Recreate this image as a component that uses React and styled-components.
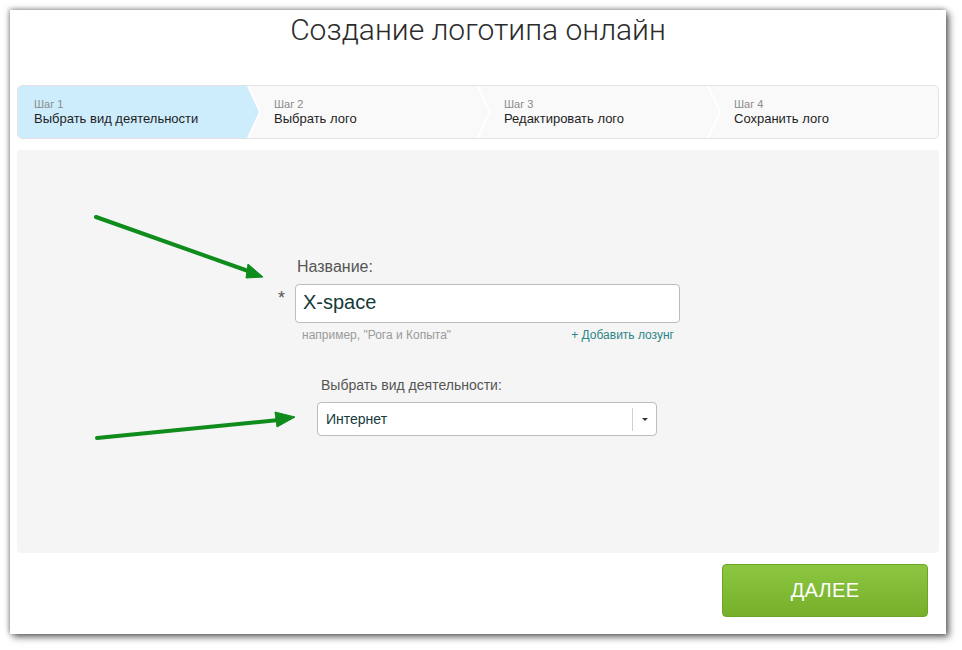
import React from "react";
import styled, { createGlobalStyle } from "styled-components";

const Global = createGlobalStyle`
  html, body { margin: 0; padding: 0; background: #ffffff; }
  body { font-family: "Liberation Sans", Arial, sans-serif; }
  * { box-sizing: border-box; }
`;

const Page = styled.div`
  width: 962px;
  height: 650px;
  padding: 10px 0 0 10px;
  background: #ffffff;
`;

const Card = styled.div`
  width: 936px;
  height: 624px;
  background: #ffffff;
  box-shadow: 3px 3px 7px rgba(0, 0, 0, 0.6), -1px -1px 5px rgba(0, 0, 0, 0.35);
  padding: 0 7px;
  display: flex;
  flex-direction: column;
`;

const Title = styled.h1`
  margin: 0 0 35px;
  height: 40px;
  line-height: 40px;
  text-align: center;
  font-family: Roboto, "Liberation Sans", sans-serif;
  font-weight: 300;
  font-size: 30px;
  color: #2b2b2b;
`;

const Steps = styled.div`
  display: flex;
  height: 54px;
  border: 1px solid #e4e4e4;
  border-radius: 5px;
  background: #f9f9f9;
  overflow: hidden;
`;

const Step = styled.div`
  position: relative;
  flex: 0 0 230px;
  display: flex;
  flex-direction: column;
  justify-content: center;
  padding-left: ${(p) => (p.$first ? "16px" : "26px")};
  z-index: ${(p) => (p.$active ? 2 : 1)};

  &::before {
    content: "";
    display: ${(p) => (p.$active ? "block" : "none")};
    position: absolute;
    top: 0;
    bottom: 0;
    left: 0;
    right: -12px;
    background: #cdedfd;
    clip-path: polygon(0 0, calc(100% - 12px) 0, 100% 50%, calc(100% - 12px) 100%, 0 100%);
  }

  &::after {
    content: "";
    display: ${(p) => (p.$last ? "none" : "block")};
    position: absolute;
    top: 0;
    bottom: 0;
    right: -14px;
    width: 15px;
    background: #ffffff;
    clip-path: polygon(0 0, 2px 0, 14px 50%, 2px 100%, 0 100%, 12px 50%);
  }
`;

const StepNum = styled.div`
  position: relative;
  font-size: 11px;
  line-height: 14px;
  color: #8a8a8a;
`;

const StepName = styled.div`
  position: relative;
  font-size: 13px;
  line-height: 16px;
  color: #1e1e1e;
`;

const Panel = styled.div`
  position: relative;
  margin-top: 11px;
  height: 403px;
  background: #f5f5f5;
  border-radius: 4px;
  padding: 108px 0 0 264px;
`;

const Arrows = styled.svg`
  position: absolute;
  left: 0;
  top: 0;
  pointer-events: none;
`;

const Form = styled.div`
  width: 400px;
  display: flex;
  flex-direction: column;
`;

const Label = styled.div`
  margin-left: ${(p) => p.$indent}px;
  font-size: ${(p) => p.$size}px;
  line-height: 18px;
  color: #555555;
`;

const InputRow = styled.div`
  display: flex;
  margin-top: 8px;
`;

const Star = styled.span`
  width: 17px;
  margin-left: -3px;
  padding-top: 6px;
  font-size: 18px;
  line-height: 17px;
  color: #555555;
`;

const TextInput = styled.div`
  width: 385px;
  height: 39px;
  border: 1px solid #bcbcbc;
  border-radius: 4px;
  background: #ffffff;
  padding: 0 0 2px 7px;
  display: flex;
  align-items: center;
  font-size: 20px;
  color: #173a3a;
`;

const HintRow = styled.div`
  display: flex;
  justify-content: space-between;
  margin: 5px 7px 0 21px;
  font-size: 12px;
  line-height: 15px;
`;

const Hint = styled.span`
  color: #9a9a9a;
`;

const AddLink = styled.span`
  color: #2c8585;
`;

const SelectGroup = styled.div`
  margin: 33px 0 0 36px;
  display: flex;
  flex-direction: column;
`;

const Select = styled.div`
  margin-top: 8px;
  width: 340px;
  height: 34px;
  border: 1px solid #bcbcbc;
  border-radius: 4px;
  background: #ffffff;
  display: flex;
  align-items: center;
  padding-left: 8px;
  font-size: 14px;
  color: #173a3a;
`;

const SelectText = styled.span`
  flex: 1;
`;

const Divider = styled.span`
  width: 1px;
  height: 23px;
  background: #cfcfcf;
`;

const Caret = styled.span`
  width: 23px;
  display: flex;
  justify-content: center;
  &::before {
    content: "";
    border-left: 3px solid transparent;
    border-right: 3px solid transparent;
    border-top: 3px solid #333;
  }
`;

const Footer = styled.div`
  display: flex;
  justify-content: flex-end;
  padding: 11px 11px 0 0;
`;

const Button = styled.button`
  width: 206px;
  height: 53px;
  border: 1px solid #6da428;
  border-radius: 4px;
  background: linear-gradient(#8dc641, #76b02b);
  color: #ffffff;
  font-family: "Liberation Sans", Arial, sans-serif;
  font-size: 20px;
  letter-spacing: 0.3px;
  cursor: pointer;
`;

const steps = [
  { n: "Шаг 1", t: "Выбрать вид деятельности" },
  { n: "Шаг 2", t: "Выбрать лого" },
  { n: "Шаг 3", t: "Редактировать лого" },
  { n: "Шаг 4", t: "Сохранить лого" },
];

export default function App() {
  return (
    <>
      <Global />
      <Page>
        <Card>
          <Title>Создание логотипа онлайн</Title>
          <Steps>
            {steps.map((s, i) => (
              <Step key={s.n} $first={i === 0} $active={i === 0} $last={i === steps.length - 1}>
                <StepNum>{s.n}</StepNum>
                <StepName>{s.t}</StepName>
              </Step>
            ))}
          </Steps>
          <Panel>
            <Arrows width="922" height="403" viewBox="0 0 922 403">
              <g fill="#0f8c1c" stroke="#0f8c1c">
                <line x1="79" y1="67" x2="234" y2="122" strokeWidth="4" strokeLinecap="round" />
                <polygon points="246,127 231,114 229,128" strokeWidth="1" strokeLinejoin="round" />
                <line x1="80" y1="288" x2="262" y2="270" strokeWidth="4" strokeLinecap="round" />
                <polygon points="278,267 258,262 260,277" strokeWidth="1" strokeLinejoin="round" />
              </g>
            </Arrows>
            <Form>
              <Label $indent={16} $size={16}>Название:</Label>
              <InputRow>
                <Star>*</Star>
                <TextInput>X-space</TextInput>
              </InputRow>
              <HintRow>
                <Hint>например, "Рога и Копыта"</Hint>
                <AddLink>+ Добавить лозунг</AddLink>
              </HintRow>
              <SelectGroup>
                <Label $indent={4} $size={14}>Выбрать вид деятельности:</Label>
                <Select>
                  <SelectText>Интернет</SelectText>
                  <Divider />
                  <Caret />
                </Select>
              </SelectGroup>
            </Form>
          </Panel>
          <Footer>
            <Button>ДАЛЕЕ</Button>
          </Footer>
        </Card>
      </Page>
    </>
  );
}
